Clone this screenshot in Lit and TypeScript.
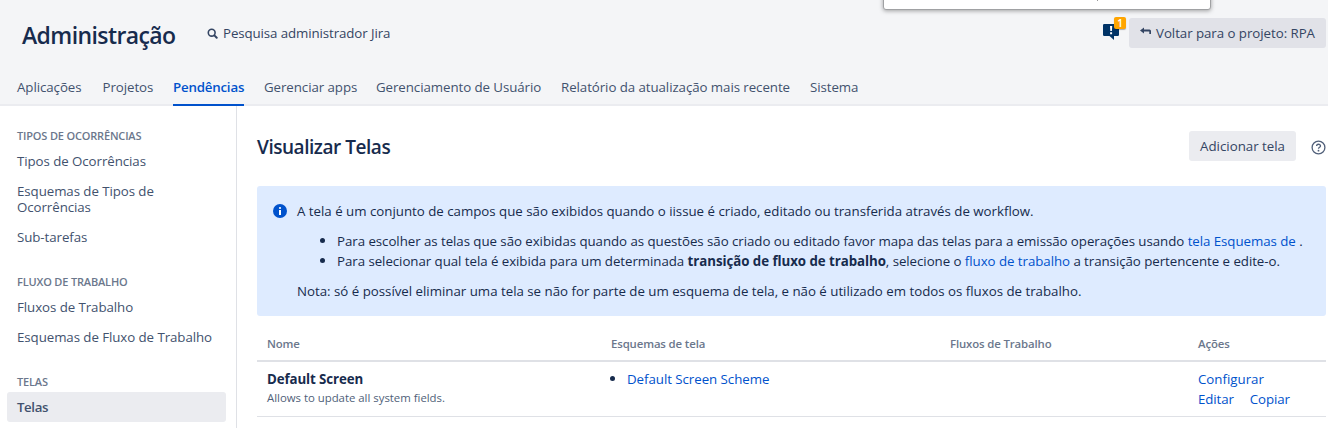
import { LitElement, html, css } from "lit";
import { customElement } from "lit/decorators.js";
import { classMap } from "lit/directives/class-map.js";

const TABS = [
  { label: "Aplicações", width: 65.5 },
  { label: "Projetos", width: 50.5 },
  { label: "Pendências", width: 71, active: true },
  { label: "Gerenciar apps", width: 92 },
  { label: "Gerenciamento de Usuário", width: 165 },
  { label: "Relatório da atualização mais recente", width: 229 },
  { label: "Sistema", width: 48 },
];

const SECTIONS = [
  { title: "TIPOS DE OCORRÊNCIAS", items: ["Tipos de Ocorrências", "Esquemas de Tipos de Ocorrências", "Sub-tarefas"] },
  { title: "FLUXO DE TRABALHO", items: ["Fluxos de Trabalho", "Esquemas de Fluxo de Trabalho"] },
  { title: "TELAS", items: ["Telas"] },
];

@customElement("app-root")
export class AppRoot extends LitElement {
  static styles = css`
    :host {
      display: block;
      position: relative;
      height: 428px;
      overflow: hidden;
      background: #fff;
      color: #172b4d;
      font: 13.3px/20px "Open Sans", "Noto Sans", sans-serif;
      letter-spacing: -0.015px;
      white-space: nowrap;
    }
    * { box-sizing: border-box; }
    a { color: #0052cc; text-decoration: none; }
    svg { display: block; flex: none; }
    .popup {
      position: absolute; left: 883px; top: -10px; width: 328px; height: 20px;
      background: #fff; border: 1px solid #a0a1a3; border-radius: 3px;
      box-shadow: 0 1px 4px rgba(0, 0, 0, 0.35);
    }
    .popup-mark { position: absolute; left: 213px; top: 9px; width: 1px; height: 1px; background: #999; }
    .header { height: 106px; background: #f4f5f7; box-shadow: inset 0 -2px #ebecf0; display: flex; flex-direction: column; }
    .top { height: 70px; display: flex; align-items: flex-start; padding: 18px 2px 0 22px; color: #344563; }
    .brand { width: 185px; margin: 0; font-size: 23px; line-height: 34px; font-weight: 600; color: #172b4d; letter-spacing: -0.6px; }
    .search { display: flex; align-items: center; gap: 5px; height: 30px; letter-spacing: -0.1px; }
    .feedback { margin-left: auto; margin-right: 3px; margin-top: -2px; position: relative; width: 23px; height: 24px; padding-top: 8px; }
    .badge {
      position: absolute; left: 11px; top: 1px; width: 12px; height: 12px; border-radius: 2px;
      background: #ffa500; color: #fff; font-size: 10px; font-weight: 600; line-height: 12px; text-align: center;
      box-shadow: 0 1px 1px rgba(0, 0, 0, 0.3);
    }
    .back { display: flex; gap: 4px; width: 197px; height: 30px; padding: 5px 11px; border-radius: 3px; background: #e1e2e8; color: #344563; letter-spacing: -0.05px; }
    .back svg { margin-top: 4px; }
    .tabs { display: flex; gap: 20px; padding-left: 17px; height: 36px; color: #42526e; letter-spacing: -0.07px; }
    .tab { height: 36px; padding-top: 7px; }
    .tab.active { color: #0052cc; font-weight: 600; border-bottom: 2px solid #0052cc; letter-spacing: -0.2px; }
    .body { display: flex; height: 322px; }
    .side { flex: none; width: 237px; border-right: 1px solid #dfe1e6; padding: 20px 10px 0 7px; display: flex; flex-direction: column; gap: 20px; color: #42526e; letter-spacing: -0.07px; }
    .side-title { height: 20px; padding-left: 10px; font-size: 11px; font-weight: 600; letter-spacing: -0.17px; color: #6b778c; }
    .item { padding: 7px 40px 7px 10px; line-height: 16px; border-radius: 3px; white-space: normal; }
    .item.nowrap { white-space: nowrap; }
    .item.active { background: #ebecf0; font-weight: 600; letter-spacing: -0.4px; }
    .main { flex: 1; min-width: 0; padding: 25px 2px 0 20px; }
    .title-row { display: flex; height: 30px; align-items: center; }
    .title { margin: 0 auto 0 0; font-size: 19px; font-weight: 600; letter-spacing: -0.46px; line-height: 30px; padding-top: 1px; }
    .button { width: 107px; height: 30px; line-height: 30px; border-radius: 3px; background: #ebecf0; color: #344563; text-align: center; margin-right: 15px; }
    .help { margin-top: 2px; }
    .info { display: grid; grid-template-columns: 24px 1fr; margin-top: 25px; height: 130px; padding: 15px 16px; background: #deebff; border-radius: 3px; }
    .info-icon { margin-top: 3px; }
    .info p { margin: 0; }
    .bullets { margin: 10px 0; padding-left: 40px; list-style: none; letter-spacing: -0.055px; }
    .bullets li::before, .scheme::before {
      content: ""; display: inline-block; width: 5px; height: 5px; border-radius: 50%; background: #172b4d;
      margin-left: -17px; margin-right: 12px; vertical-align: 3px;
    }
    strong { font-weight: 700; }
    .row { display: grid; grid-template-columns: 344px 339px 248px 1fr; }
    .row > div { padding-left: 10px; }
    .head { height: 46px; padding-top: 18px; border-bottom: 2px solid #dfe1e6; color: #6b778c; font-size: 11.4px; font-weight: 600; letter-spacing: -0.13px; }
    .data { height: 55px; padding-top: 7px; border-bottom: 1px solid #dfe1e6; }
    .name { font-weight: 700; letter-spacing: -0.1px; }
    .desc { font-size: 11.4px; line-height: 18px; color: #505f79; }
    .data > .scheme { padding-left: 26px; letter-spacing: -0.05px; }
    .actions-row { display: flex; gap: 16px; letter-spacing: -0.1px; }
  `;

  render() {
    return html`
      <header class="header">
        <div class="top">
          <h1 class="brand">Administração</h1>
          <div class="search">
            <svg width="11" height="12" viewBox="0 0 11 12" fill="none" stroke="#344563">
              <circle cx="4.7" cy="5.7" r="3.4" stroke-width="1.6" />
              <path d="M7.400 8.400l2.300 2.300" stroke-width="2" stroke-linecap="round" />
            </svg>
            <span>Pesquisa administrador Jira</span>
          </div>
          <div class="feedback">
            <svg width="17" height="16" viewBox="0 0 17 16">
              <path d="M1.200 0h13.600a1.200 1.200 0 0 1 1.200 1.200v9.600a1.200 1.200 0 0 1-1.200 1.200H11v4L6.500 12H1.200A1.200 1.200 0 0 1 0 10.800V1.200A1.200 1.200 0 0 1 1.200 0z" fill="#003366" />
              <path d="M7 2h2.200l-.3 5H7.300zM7.100 8.200h2v2h-2z" fill="#fff" />
            </svg>
            <span class="badge">1</span>
          </div>
          <div class="back">
            <svg width="12" height="9" viewBox="0 0 12 9"><path d="M0 3.500L4 .5v2h5.500q1.500 0 1.500 1.500v3H9.300V4.600H4v2z" fill="#344563" /></svg>
            <span>Voltar para o projeto: RPA</span>
          </div>
        </div>
        <nav class="tabs">
          ${TABS.map((t) => html`<div class=${classMap({ tab: true, active: !!t.active })} style="width:${t.width}px">${t.label}</div>`)}
        </nav>
      </header>
      <div class="body">
        <aside class="side">
          ${SECTIONS.map((s) => html`<section>
            <div class="side-title">${s.title}</div>
            ${s.items.map((i) => html`<div class=${classMap({ item: true, active: i === "Telas", nowrap: i.includes("Trabalho") })}>${i}</div>`)}
          </section>`)}
        </aside>
        <main class="main">
          <div class="title-row">
            <h2 class="title">Visualizar Telas</h2>
            <div class="button">Adicionar tela</div>
            <svg class="help" width="15" height="15" viewBox="0 0 15 15" fill="none" stroke="#505f79">
              <circle cx="7.500" cy="7.500" r="6.400" stroke-width="1.300" />
              <path d="M5.600 6.100c0-2.500 3.900-2.400 3.900-.2 0 1.400-2 1.500-2 2.900" stroke-width="1.300" />
              <circle cx="7.500" cy="10.700" r=".9" fill="#505f79" stroke="none" />
            </svg>
          </div>
          <section class="info">
            <svg class="info-icon" width="14" height="14" viewBox="0 0 14 14">
              <circle cx="7" cy="7" r="7" fill="#0052cc" />
              <path d="M6 6h2v5H6z" fill="#fff" /><circle cx="7" cy="4" r="1.100" fill="#fff" />
            </svg>
            <div>
              <p>A tela é um conjunto de campos que são exibidos quando o iissue é criado, editado ou transferida através de workflow.</p>
              <ul class="bullets">
                <li>Para escolher as telas que são exibidas quando as questões são criado ou editado favor mapa das telas para a emissão operações usando <a>tela Esquemas de</a> .</li>
                <li>Para selecionar qual tela é exibida para um determinada <strong>transição de fluxo de trabalho</strong>, selecione o <a>fluxo de trabalho</a> a transição pertencente e edite-o.</li>
              </ul>
              <p>Nota: só é possível eliminar uma tela se não for parte de um esquema de tela, e não é utilizado em todos os fluxos de trabalho.</p>
            </div>
          </section>
          <div class="row head"><div>Nome</div><div>Esquemas de tela</div><div>Fluxos de Trabalho</div><div>Ações</div></div>
          <div class="row data">
            <div><div class="name">Default Screen</div><div class="desc">Allows to update all system fields.</div></div>
            <div class="scheme"><a>Default Screen Scheme</a></div>
            <div></div>
            <div><a>Configurar</a><div class="actions-row"><a>Editar</a><a>Copiar</a></div></div>
          </div>
        </main>
      </div>
      <div class="popup"><span class="popup-mark"></span></div>
    `;
  }
}
